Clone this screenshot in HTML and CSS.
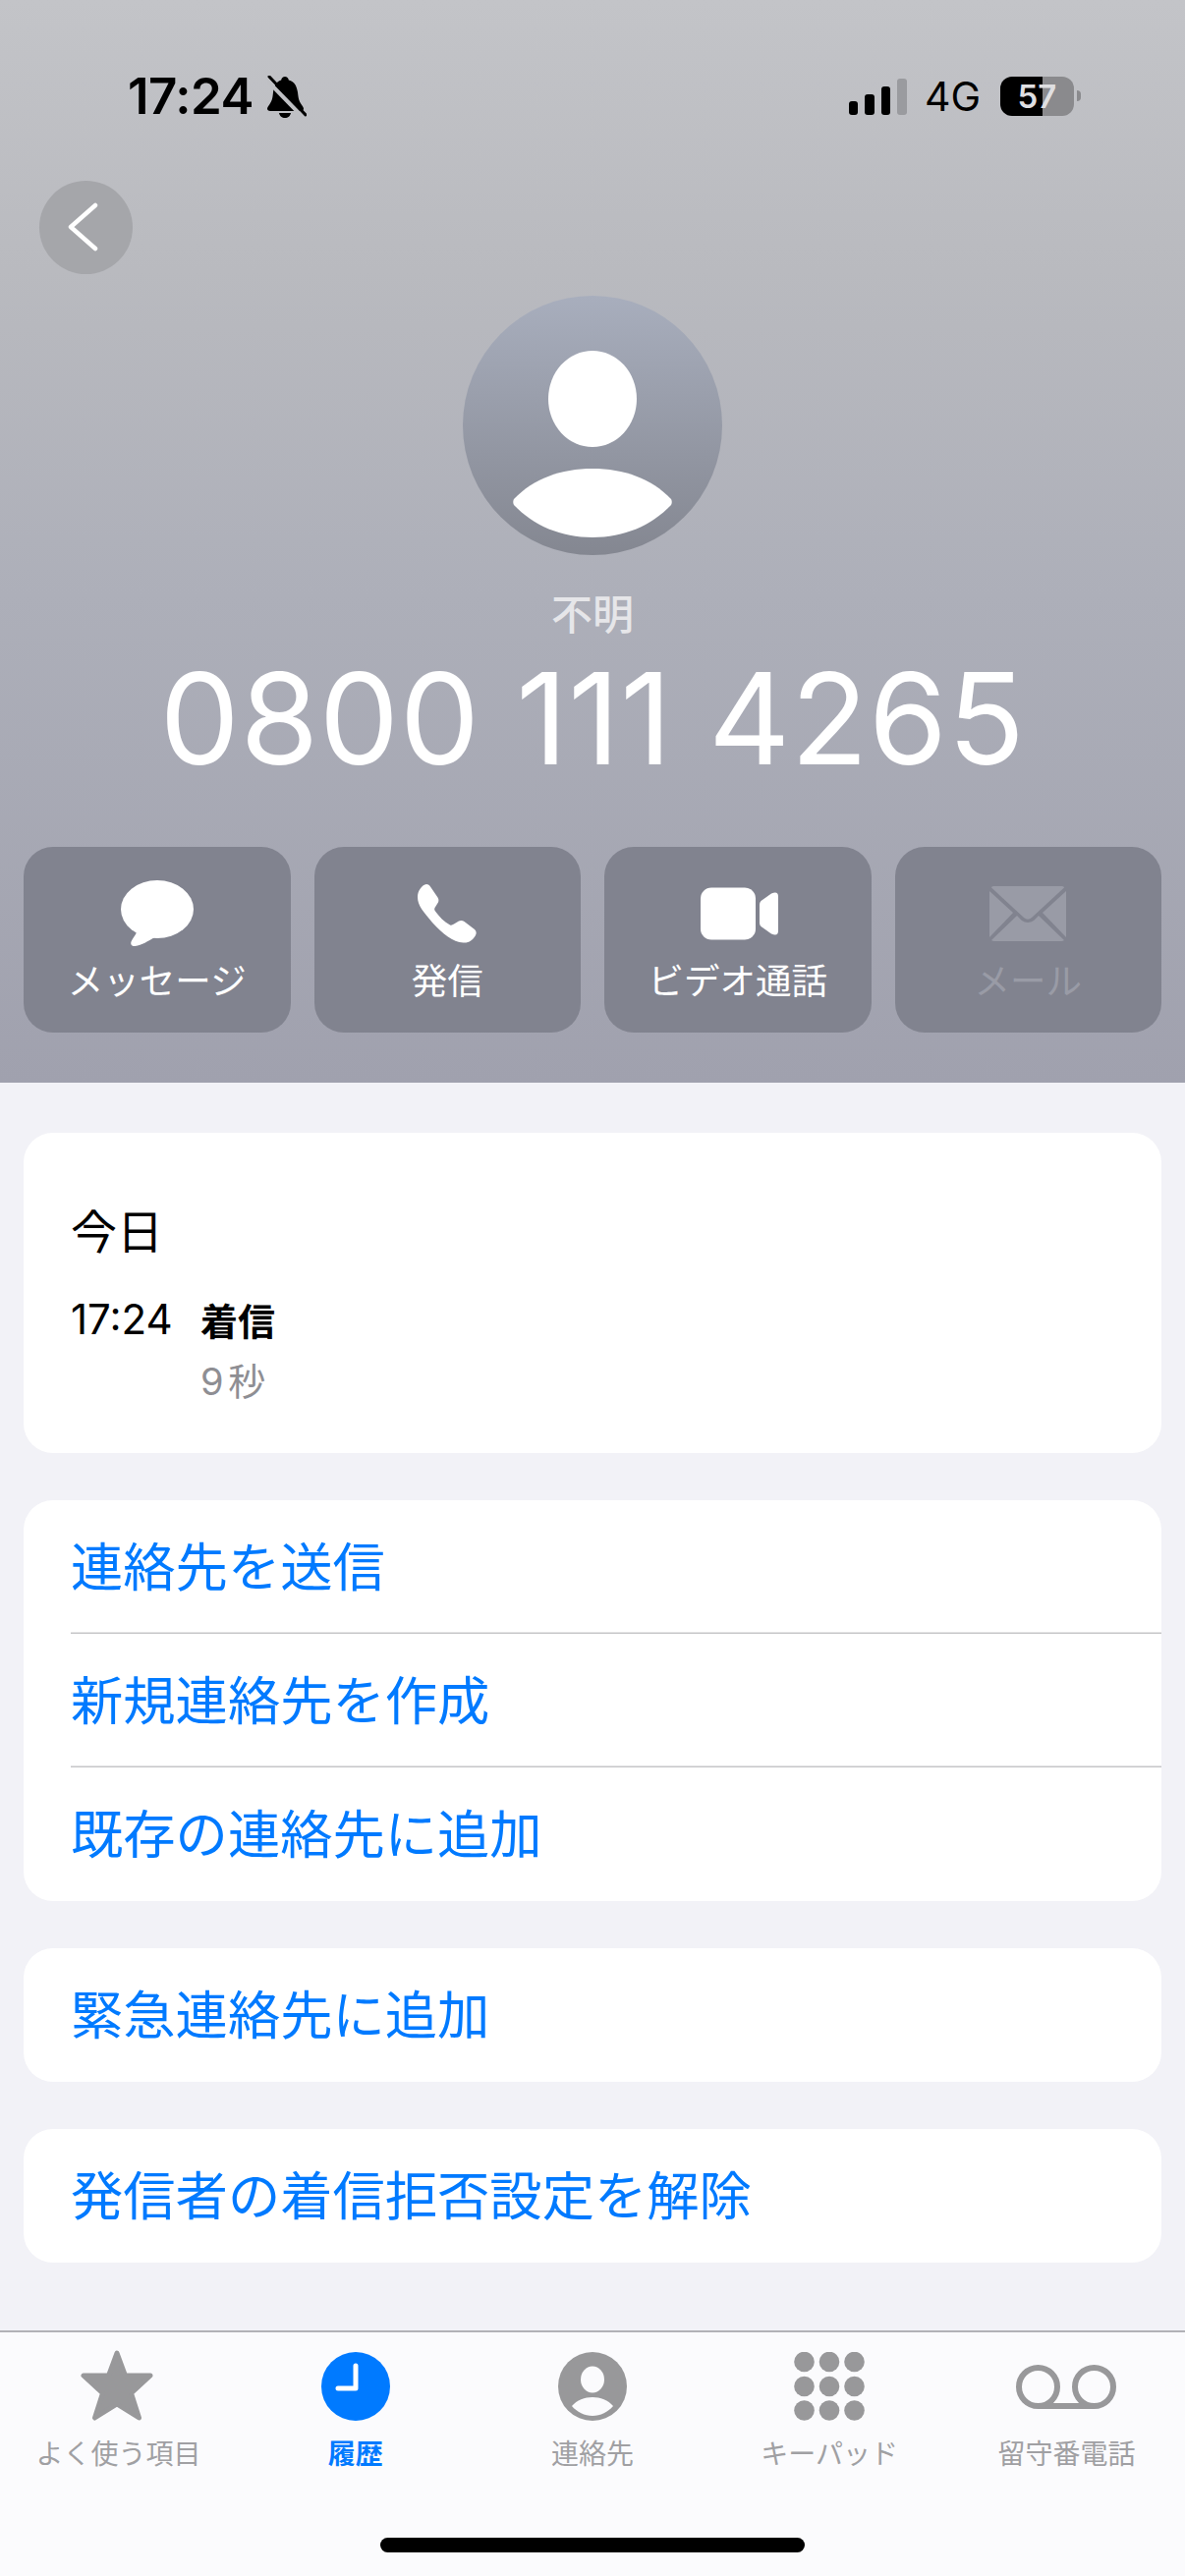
FILE: index.html
```html
<!DOCTYPE html>
<html lang="ja">
<head>
<meta charset="utf-8">
<title>不明</title>
<link rel="stylesheet" href="styles.css">
</head>
<body>
<div class="page">
  <header class="hero">
    <div class="status">
      <div class="status-left">
        <span class="time">17:24</span>
        <svg class="bell" width="40" height="43" viewBox="0 0 40 43">
          <path d="M18 1c2 0 3.500 1.500 3.800 3.500C28 6 30 11 31 17c.6 6 1.500 9 3.500 12 1.500 2 2.500 3.500 2.500 4.500 0 1.500-1 2.500-3 2.500H3c-2 0-3-1-3-2.500 0-1 1-2.500 2.500-4.500C4.500 26 5.500 23 6 17c.7-6 3-11 8.200-12.500C14.500 2.500 16 1 18 1z" fill="#000"/>
          <path d="M12 38h12c-.5 3-3 5-6 5s-5.500-2-6-5z" fill="#000"/>
          <path d="M-2 3 35 41" stroke="#bfc0c4" stroke-width="4"/>
          <path d="M2 1 39 40" stroke="#000" stroke-width="3" stroke-linecap="round"/>
        </svg>
      </div>
      <div class="status-right">
        <div class="signal">
          <span class="bar bar-1"></span>
          <span class="bar bar-2"></span>
          <span class="bar bar-3"></span>
          <span class="bar bar-4"></span>
        </div>
        <span class="network">4G</span>
        <div class="battery"><span class="battery-level">57</span><span class="battery-nub"></span></div>
      </div>
    </div>

    <div class="nav">
      <div class="back">
        <svg width="95" height="95" viewBox="0 0 95 95"><path d="M57 25 32 47l25 22" fill="none" stroke="#fff" stroke-width="4.500" stroke-linecap="round" stroke-linejoin="round"/></svg>
      </div>
    </div>

    <svg class="avatar" width="264" height="264" viewBox="0 0 264 264">
      <defs>
        <linearGradient id="avatarFill" x1="0" y1="0" x2="0" y2="1">
          <stop offset="0" stop-color="#a8aebd"/>
          <stop offset="1" stop-color="#848791"/>
        </linearGradient>
      </defs>
      <circle cx="132" cy="132" r="132" fill="url(#avatarFill)"/>
      <ellipse cx="132" cy="105" rx="45" ry="49" fill="#fff"/>
      <path d="M52 207C72 186 100 176 132 176s60 10 80 31c1 2 1 4 0 6C192 234 164 246 132 246s-60-12-80-33c-1-2-1-4 0-6z" fill="#fff"/>
    </svg>

    <div class="name">不明</div>
    <div class="number">0800 111 4265</div>

    <div class="actions">
      <div class="action">
        <svg class="action-icon" width="74" height="68" viewBox="0 0 74 68">
          <ellipse cx="37" cy="29.500" rx="37" ry="29.500" fill="#fff"/>
          <path d="M17 50c-1 5-5 9-6.500 12.500-1 3 1 5 4 4.500 7-1 13-5 20-9z" fill="#fff"/>
        </svg>
        <span class="action-label">メッセージ</span>
      </div>
      <div class="action">
        <svg class="action-icon" width="60" height="60" viewBox="0 0 60 60">
          <path d="M9 0c2 0 3 1 4 2.500l7.500 11c1.500 2.500 1 4.500-.5 6.500l-2.500 4c-.5 1.500-.5 2 .5 3.500 4 5.500 9 11 15 14 1.500.5 2.500 0 4-1l5-3c2-1 4-.5 5.500.5L58 46c2 2 2 4 1 6-3 5-7 8-12.500 7.500C36 59 25 50 15 39 6 28 0 22 0 13 0 7 4 1 9 0z" fill="#fff"/>
        </svg>
        <span class="action-label">発信</span>
      </div>
      <div class="action">
        <svg class="action-icon action-icon-video" width="79" height="53" viewBox="0 0 79 53">
          <rect width="56" height="53" rx="11" fill="#fff"/>
          <path d="M60 17q0-2 1.500-3.500L72 6q7-3 7 3v35q0 6-7 3l-10.500-7.500Q60 38 60 36z" fill="#fff"/>
        </svg>
        <span class="action-label">ビデオ通話</span>
      </div>
      <div class="action action-off">
        <svg class="action-icon" width="78" height="56" viewBox="0 0 78 56">
          <path d="M4 0h70q2 0 2 1.500L43 32q-4 3.500-8 0L2 1.500Q2 0 4 0z" fill="#999ba6"/>
          <path d="M0 5l24 22L0 52z" fill="#999ba6"/>
          <path d="M78 5 54 27l24 25z" fill="#999ba6"/>
          <path d="M28 30l5 5q6 4 12 0l5-5 26 25q-1 1-3 1H5q-2 0-3-1z" fill="#999ba6"/>
        </svg>
        <span class="action-label">メール</span>
      </div>
    </div>
  </header>

  <main class="content">
    <section class="card card-log">
      <div class="log-day">今日</div>
      <div class="log-row">
        <span class="log-time">17:24</span>
        <span class="log-type">着信</span>
      </div>
      <div class="log-duration">9 秒</div>
    </section>

    <section class="card">
      <div class="row">連絡先を送信</div>
      <div class="row">新規連絡先を作成</div>
      <div class="row">既存の連絡先に追加</div>
    </section>

    <section class="card">
      <div class="row">緊急連絡先に追加</div>
    </section>

    <section class="card">
      <div class="row">発信者の着信拒否設定を解除</div>
    </section>
  </main>

  <nav class="tabs">
    <div class="tab">
      <div class="tab-icon">
        <svg class="star" width="76" height="73" viewBox="0 0 76 73">
          <path d="M38 4 46.500 27H72L52.500 45 60.500 70 38 56 15.500 70 23.500 45 4 27H29.500z" fill="#98989a" stroke="#98989a" stroke-width="5" stroke-linejoin="round"/>
        </svg>
      </div>
      <span class="tab-label">よく使う項目</span>
    </div>
    <div class="tab tab-on">
      <div class="tab-icon">
        <svg width="70" height="70" viewBox="0 0 70 70">
          <circle cx="35" cy="35" r="35" fill="#007aff"/>
          <path d="M35 14V37H17" fill="none" stroke="#fff" stroke-width="5" stroke-linecap="round" stroke-linejoin="round"/>
        </svg>
      </div>
      <span class="tab-label">履歴</span>
    </div>
    <div class="tab">
      <div class="tab-icon">
        <svg width="70" height="70" viewBox="0 0 70 70">
          <circle cx="35" cy="35" r="35" fill="#98989a"/>
          <ellipse cx="35" cy="28" rx="12" ry="13.500" fill="#fbfbfd"/>
          <path d="M14 55c5-6 13-9 21-9s16 3 21 9c-5 6-13 10-21 10s-16-4-21-10z" fill="#fbfbfd"/>
        </svg>
      </div>
      <span class="tab-label">連絡先</span>
    </div>
    <div class="tab">
      <div class="tab-icon">
        <svg width="72" height="70" viewBox="0 0 72 70">
          <g fill="#98989a">
            <circle cx="10.500" cy="10" r="10.300"/><circle cx="36" cy="10" r="10.300"/><circle cx="61.500" cy="10" r="10.300"/>
            <circle cx="10.500" cy="35" r="10.300"/><circle cx="36" cy="35" r="10.300"/><circle cx="61.500" cy="35" r="10.300"/>
            <circle cx="10.500" cy="59.500" r="10.300"/><circle cx="36" cy="59.500" r="10.300"/><circle cx="61.500" cy="59.500" r="10.300"/>
          </g>
        </svg>
      </div>
      <span class="tab-label">キーパッド</span>
    </div>
    <div class="tab">
      <div class="tab-icon">
        <svg width="102" height="45" viewBox="0 0 102 45">
          <g fill="none" stroke="#98989a" stroke-width="6">
            <circle cx="22.500" cy="22.500" r="19.500"/>
            <circle cx="79.500" cy="22.500" r="19.500"/>
            <path d="M22.500 42H79.500"/>
          </g>
        </svg>
      </div>
      <span class="tab-label">留守番電話</span>
    </div>
    <span class="home-bar"></span>
  </nav>
</div>
</body>
</html>
```

FILE: styles.css
```css
* { box-sizing: border-box; }

html, body { margin: 0; padding: 0; }

body {
  font-family: Inter, "Noto Sans CJK JP", sans-serif;
  color: #000;
  background: #f2f2f7;
}

.page {
  width: 1206px;
  height: 2622px;
  display: flex;
  flex-direction: column;
  overflow: hidden;
}

.hero {
  height: 1102px;
  padding-top: 77px;
  display: flex;
  flex-direction: column;
  align-items: center;
  background: linear-gradient(180deg, #c3c4c8 0%, #b9babf 25%, #adafb9 55%, #a0a1ae 100%);
}

.status {
  width: 100%;
  height: 42px;
  padding: 0 113px 0 130px;
  display: flex;
  justify-content: space-between;
  align-items: center;
}

.status-left { display: flex; align-items: center; gap: 14px; }

.time {
  font-size: 51px;
  font-weight: 600;
  line-height: 42px;
  letter-spacing: -0.5px;
}

.bell { display: block; }

.status-right { display: flex; align-items: center; }

.signal { display: flex; align-items: flex-end; gap: 7px; height: 37px; }

.bar { display: block; width: 9.500px; border-radius: 3px; background: #000; }
.bar-1 { height: 14px; }
.bar-2 { height: 21px; }
.bar-3 { height: 29px; }
.bar-4 { height: 37px; background: #9a9b9f; }

.network {
  margin-left: 18px;
  font-size: 41px;
  font-weight: 400;
  line-height: 42px;
}

.battery {
  position: relative;
  width: 75px;
  height: 40px;
  margin-left: 20px;
  border-radius: 12px;
  background: linear-gradient(90deg, #000 0 43px, #8a8a8d 43px 100%);
  display: flex;
  align-items: center;
  justify-content: center;
}

.battery-level {
  font-size: 33px;
  font-weight: 600;
  line-height: 40px;
  color: #dfdfe1;
}

.battery-nub {
  position: absolute;
  left: 78px;
  top: 14px;
  width: 4px;
  height: 11px;
  border-radius: 0 4px 4px 0;
  background: #8a8a8d;
}

.nav {
  width: 100%;
  margin-top: 65px;
  padding-left: 40px;
}

.back {
  width: 95px;
  height: 95px;
  border-radius: 50%;
  background: #a5a6aa;
}

.back svg { display: block; }

.avatar { display: block; margin-top: 22px; }

.name {
  margin-top: 36px;
  font-size: 42px;
  font-weight: 500;
  line-height: 50px;
  color: #e6e6e9;
}

.number {
  margin-top: 10px;
  font-size: 129px;
  font-weight: 400;
  line-height: 140px;
  letter-spacing: 0.5px;
  color: #fff;
  white-space: nowrap;
}

.actions {
  width: 100%;
  margin-top: 61px;
  padding: 0 24px;
  display: grid;
  grid-template-columns: repeat(4, 1fr);
  gap: 24px;
}

.action {
  height: 189px;
  padding-top: 33px;
  border-radius: 30px;
  background: #81838f;
  display: flex;
  flex-direction: column;
  align-items: center;
  color: #fff;
}

.action-icon { display: block; height: 70px; }

.action-icon-video { margin-left: 3px; }

.action-label {
  margin-top: 11px;
  font-size: 36.500px;
  line-height: 46px;
  white-space: nowrap;
}

.action-off { color: #999ba6; }

.content {
  flex: 1;
  padding: 51px 24px 0;
  display: flex;
  flex-direction: column;
  gap: 48px;
}

.card {
  border-radius: 30px;
  background: #fff;
}

.card-log {
  height: 326px;
  padding: 74px 48px 0;
}

.log-day {
  font-size: 47px;
  line-height: 54px;
}

.log-row {
  margin-top: 34px;
  display: grid;
  grid-template-columns: 132px auto;
  align-items: center;
  height: 50px;
}

.log-time { font-size: 42px; font-weight: 400; }

.log-type { font-size: 38px; font-weight: 700; }

.log-duration {
  margin: 19px 0 0 132px;
  font-size: 38px;
  line-height: 44px;
  word-spacing: -6px;
  color: #8e8e93;
}

.row {
  height: 136px;
  margin-left: 48px;
  padding-bottom: 8px;
  display: flex;
  align-items: center;
  font-size: 53.300px;
  color: #007aff;
}

.row + .row { box-shadow: 0 -1.500px 0 #c6c6c8; }

.tabs {
  position: relative;
  height: 250px;
  padding-top: 10px;
  border-top: 2px solid #b2b2b7;
  background: #fbfbfd;
  display: grid;
  grid-template-columns: repeat(5, 1fr);
  align-content: start;
}

.tab {
  display: flex;
  flex-direction: column;
  align-items: center;
  color: #a0a0a3;
}

.tab-icon {
  height: 90px;
  display: flex;
  align-items: center;
  justify-content: center;
}

.tab-icon svg { display: block; }

.tab-icon .star { margin: 0 3px 4px 0; }

.tab-label {
  margin-top: 6px;
  font-size: 28px;
  line-height: 36px;
  white-space: nowrap;
}

.tab-on { color: #007aff; font-weight: 700; }

.home-bar {
  position: absolute;
  left: 387px;
  bottom: 24px;
  width: 432px;
  height: 15px;
  border-radius: 8px;
  background: #000;
}
```
